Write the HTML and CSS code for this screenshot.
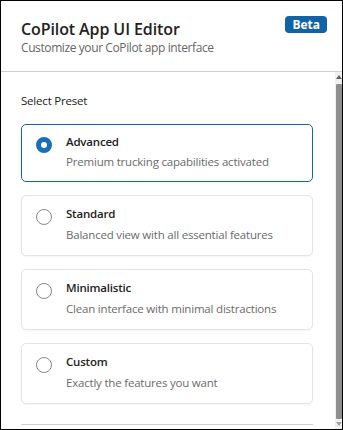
FILE: index.html
```html
<!DOCTYPE html>
<html lang="en">
<head>
    <meta charset="UTF-8">
    <meta name="viewport" content="width=device-width, initial-scale=1.0">
    <title>CoPilot App UI Editor</title>
    <link rel="stylesheet" href="styles.css">
</head>
<body>
    <div class="panel">
        <header class="panel-header">
            <div>
                <h1>CoPilot App UI Editor</h1>
                <p class="subtitle">Customize your CoPilot app interface</p>
            </div>
            <span class="badge">Beta</span>
        </header>

        <div class="panel-body">
            <div class="content">
                <h2 class="section-label">Select Preset</h2>

                <div class="presets">
                    <div class="preset selected">
                        <span class="radio"></span>
                        <div>
                            <div class="preset-title">Advanced</div>
                            <div class="preset-desc">Premium trucking capabilities activated</div>
                        </div>
                    </div>
                    <div class="preset">
                        <span class="radio"></span>
                        <div>
                            <div class="preset-title">Standard</div>
                            <div class="preset-desc">Balanced view with all essential features</div>
                        </div>
                    </div>
                    <div class="preset">
                        <span class="radio"></span>
                        <div>
                            <div class="preset-title">Minimalistic</div>
                            <div class="preset-desc">Clean interface with minimal distractions</div>
                        </div>
                    </div>
                    <div class="preset">
                        <span class="radio"></span>
                        <div>
                            <div class="preset-title">Custom</div>
                            <div class="preset-desc">Exactly the features you want</div>
                        </div>
                    </div>
                </div>

                <hr class="divider">
            </div>

            <div class="scrollbar">
                <span class="arrow-up"></span>
                <div class="thumb"></div>
                <span class="arrow-down"></span>
            </div>
        </div>
    </div>
</body>
</html>
```

FILE: styles.css
```css
body {
    margin: 0;
    font-family: "Open Sans", Arial, sans-serif;
    background-color: #fff;
}
.panel {
    width: 343px;
    height: 430px;
    box-sizing: border-box;
    border: 1px solid #000;
    display: flex;
    flex-direction: column;
    overflow: hidden;
}
.panel-header {
    height: 71px;
    box-sizing: border-box;
    flex-shrink: 0;
    padding: 15px 15px 0 20px;
    border-bottom: 1px solid #cfcfcf;
    display: flex;
    justify-content: space-between;
    align-items: flex-start;
}
.panel-header h1 {
    margin: 3px 0 0;
    font-size: 16px;
    line-height: 20px;
    font-weight: 600;
    letter-spacing: -0.1px;
    color: #222;
}
.subtitle {
    margin: 0;
    font-size: 12px;
    line-height: 18px;
    letter-spacing: -0.4px;
    color: #666;
}
.badge {
    background-color: #1162a6;
    color: #fff;
    font-size: 12px;
    font-weight: 700;
    line-height: 17px;
    padding: 0 7px;
    border-radius: 4px;
}
.panel-body {
    flex: 1;
    display: flex;
    min-height: 0;
}
.content {
    flex: 1;
    padding: 21px 22px 0 20px;
}
.section-label {
    margin: 0 0 15px;
    font-size: 11.5px;
    line-height: 16px;
    font-weight: 400;
    letter-spacing: -0.2px;
    color: #222;
}
.presets {
    display: flex;
    flex-direction: column;
    gap: 13px;
}
.preset {
    display: flex;
    align-items: flex-start;
    gap: 14px;
    padding: 9px 14px 12px;
    border: 1px solid #e4e4e4;
    border-radius: 5px;
    box-shadow: 0 1px 2px rgba(0, 0, 0, 0.04);
}
.preset.selected {
    padding: 8px 14px 11px;
    border-color: #1b65a6;
}
.radio {
    width: 16px;
    height: 16px;
    box-sizing: border-box;
    margin-top: 4px;
    flex-shrink: 0;
    border: 1px solid #8a8a8a;
    border-radius: 50%;
}
.selected .radio {
    border: 5px solid #1b6fb5;
}
.preset-title {
    font-size: 11.5px;
    line-height: 18px;
    font-weight: 600;
    letter-spacing: -0.2px;
    color: #222;
}
.preset-desc {
    margin-top: 4px;
    font-size: 11.5px;
    line-height: 16px;
    letter-spacing: -0.2px;
    color: #6b6b6b;
}
.selected .preset-desc {
    margin-top: 3px;
}
.divider {
    margin: 20px 0 0;
    border: none;
    border-top: 1px solid #cfcfcf;
}
.scrollbar {
    width: 7px;
    flex-shrink: 0;
    background-color: #f1f1f1;
    display: flex;
    flex-direction: column;
    align-items: center;
}
.arrow-up {
    margin-top: 3px;
    border-left: 3px solid transparent;
    border-right: 3px solid transparent;
    border-bottom: 4px solid #606060;
}
.thumb {
    flex: 1;
    width: 6px;
    margin: 5px 0 3px;
    background-color: #8f8f8f;
    border-radius: 1px;
}
.arrow-down {
    margin-bottom: 3px;
    border-left: 3px solid transparent;
    border-right: 3px solid transparent;
    border-top: 4px solid #a0a0a0;
}
```
